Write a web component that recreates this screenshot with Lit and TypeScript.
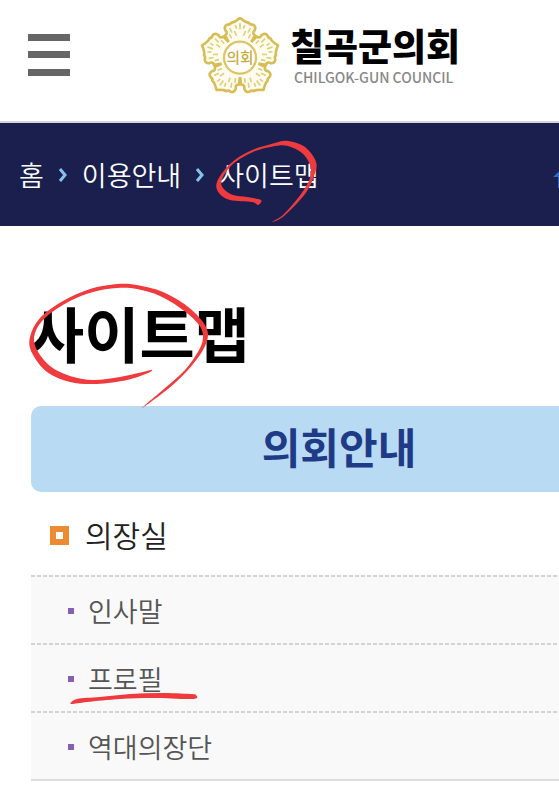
import { LitElement, html, svg, css } from "lit";
import { customElement } from "lit/decorators.js";

type Point = [number, number];

/** Closed Catmull-Rom outline through the points. */
function outline(points: Point[]): string {
  const n = points.length;
  let d = `M${points[0][0]} ${points[0][1]}`;
  for (let i = 0; i < n; i++) {
    const a = points[(i + n - 1) % n];
    const b = points[i];
    const c = points[(i + 1) % n];
    const e = points[(i + 2) % n];
    d += `C${b[0] + (c[0] - a[0]) / 6} ${b[1] + (c[1] - a[1]) / 6} ${c[0] - (e[0] - b[0]) / 6} ${c[1] - (e[1] - b[1]) / 6} ${c[0]} ${c[1]}`;
  }
  return d + "Z";
}

const crumbMark: Point[] = [
  [272, 222], [284, 216], [305, 194], [314, 176], [316, 162], [305, 147], [288, 141], [275, 143],
  [250, 151], [230, 164], [217, 182], [219, 193], [230, 200], [252, 202], [258, 205], [261, 200],
  [247, 197], [233, 195], [223, 188], [222, 179], [233, 164], [253, 152], [275, 146], [288, 146],
  [302, 153], [310, 165], [310, 178], [301, 194], [284, 214],
];

const titleMark: Point[] = [
  [142, 408], [168, 389], [188, 370], [203, 350], [208, 335], [203, 322], [187, 306], [163, 292],
  [137, 285], [117, 284], [90, 289], [63, 301], [40, 318], [30, 337], [32, 353], [47, 372],
  [70, 382], [97, 384], [127, 380], [148, 373], [152, 370], [147, 371], [120, 377], [93, 380],
  [70, 376], [50, 366], [36, 348], [35, 333], [46, 317], [70, 301], [93, 292], [117, 288],
  [137, 289], [160, 296], [183, 310], [199, 325], [203, 337], [199, 350], [185, 370], [165, 388],
];

const profileMark: Point[] = [
  [71, 704], [77, 699], [100, 697], [130, 694], [160, 693], [190, 694], [196, 695], [193, 699],
  [153, 698], [120, 699], [87, 702],
];

@customElement("app-root")
export class AppRoot extends LitElement {
  static styles = css`
    :host {
      display: block;
      position: relative;
      overflow: hidden;
      background: #fff;
      color: #222;
      font-family: "Noto Sans CJK KR", "Noto Sans", sans-serif;
    }
    *, *::before { box-sizing: border-box; }
    a { color: inherit; text-decoration: none; }
    h1, h2, ul { margin: 0; padding: 0; }
    ul { list-style: none; }
    /* The page is wider than the viewport and runs off its right side. */
    .page { width: calc(100% + 119px); }
    .header {
      display: grid;
      grid-template-columns: 1fr auto 1fr;
      align-items: center;
      height: 123px;
      padding: 0 28px 12px;
      border-bottom: 2px solid #d3d5de;
    }
    .menu {
      display: flex;
      flex-direction: column;
      justify-content: space-between;
      width: 42px;
      height: 42px;
      padding: 0;
      border: 0;
      background: none;
    }
    .menu span { height: 7px; background: #666; }
    .logo { display: flex; align-items: center; gap: 10px; margin: 4px 18px 0 0; }
    .emblem { width: 80px; height: 80px; }
    .emblem text { font-size: 44px; font-weight: 500; }
    .names { display: flex; flex-direction: column; }
    .name { font-size: 37px; font-weight: 900; line-height: 40px; color: #000; }
    .english { padding-left: 4px; font-size: 14px; font-weight: 500; line-height: 24px; color: #888; }
    .path {
      display: flex;
      align-items: center;
      justify-content: space-between;
      height: 103px;
      padding: 0 89px 0 19px;
      background: #1a1f4e;
      color: #fff;
    }
    .path a { display: flex; }
    .crumbs { display: flex; align-items: center; font-size: 27px; font-weight: 350; line-height: 40px; }
    .chevron { width: 10px; height: 14px; margin: 0 14px; }
    .home { width: 36px; height: 36px; }
    .main { padding: 72px 31px 0; }
    .title { margin-left: -2px; font-size: 60px; font-weight: 700; line-height: 68px; color: #000; }
    .section {
      height: 86px;
      margin-top: 40px;
      border-radius: 10px;
      background: #b8dbf3;
      color: #1f3a87;
      font-size: 42px;
      font-weight: 700;
      line-height: 80px;
      text-align: center;
    }
    .group {
      display: flex;
      align-items: center;
      gap: 16px;
      height: 83px;
      padding-left: 19px;
      font-size: 30px;
      font-weight: 350;
      line-height: 40px;
    }
    .group::before { content: ""; width: 19px; height: 19px; margin-top: 4px; border: 6px solid #ed8b33; }
    .list { border-bottom: 2px solid #ddd; }
    .item {
      display: flex;
      align-items: center;
      gap: 14px;
      height: 68px;
      padding: 2px 0 0 37px;
      background: repeating-linear-gradient(90deg, #d3d3d3 0 4px, #f9f9f9 4px 6px) top / 100% 2px no-repeat #f9f9f9;
      color: #555;
      font-size: 27px;
      font-weight: 350;
    }
    .item::before { content: ""; width: 6px; height: 6px; margin-top: 2px; background: #8560b5; }
    .marks { position: absolute; top: 0; left: 0; width: 559px; height: 785px; pointer-events: none; }
  `;

  private chevron() {
    return html`<svg class="chevron" viewBox="0 0 10 14" aria-hidden="true">
      <path d="M2 1L7 7L2 13" fill="none" stroke="#86c3ec" stroke-width="3" />
    </svg>`;
  }

  private emblem() {
    const petal = "M-34 -47L-45 -67C-39 -70 -38 -77 -44 -82C-48 -90 -44 -98 -37 -99C-32 -99 -28 -101 -26 -105C-18 -105 -8 -113 0 -120C8 -113 18 -105 26 -105C28 -101 32 -99 37 -99C44 -98 48 -90 44 -82C38 -77 39 -70 45 -67L34 -47";
    const veins = "M-25 -58L-32 -70M-24 -75L-31 -89M-11 -66L-16 -80M-10 -87L-14 -98M0 -85L0 -103M10 -87L14 -98M11 -66L16 -80M24 -75L31 -89M25 -58L32 -70";
    return html`<svg class="emblem" viewBox="-120 -122 240 240" role="img" aria-label="의회">
      ${[0, 72, 144, 216, 288].map(
        (angle) => svg`<g transform="rotate(${angle})" fill="none" stroke-linejoin="round">
          <path d=${petal} fill="#fffdf0" stroke="#d8bd57" stroke-width="8" />
          <path d=${veins} stroke="#e2cd7c" stroke-width="5" />
        </g>`,
      )}
      <circle r="48" fill="#fff" stroke="#dcc469" stroke-width="7" />
      <text y="16" text-anchor="middle" fill="#c9aa3c">의회</text>
    </svg>`;
  }

  render() {
    return html`
      <div class="page">
        <header class="header">
          <button class="menu" aria-label="메뉴"><span></span><span></span><span></span></button>
          <a class="logo" href="#">
            ${this.emblem()}
            <span class="names">
              <span class="name">칠곡군의회</span>
              <span class="english">CHILGOK-GUN COUNCIL</span>
            </span>
          </a>
        </header>
        <nav class="path">
          <div class="crumbs">
            <a href="#">홈</a>${this.chevron()}<a href="#">이용안내</a>${this.chevron()}<a href="#">사이트맵</a>
          </div>
          <a href="#" aria-label="홈">
            <svg class="home" viewBox="0 0 36 36">
              <path d="M18 3L36 20H31V31H5V20H0Z" fill="#3268c8" />
            </svg>
          </a>
        </nav>
        <main class="main">
          <h1 class="title">사이트맵</h1>
          <h2 class="section">의회안내</h2>
          <a class="group" href="#">의장실</a>
          <ul class="list">
            ${["인사말", "프로필", "역대의장단"].map((name) => html`<li><a class="item" href="#">${name}</a></li>`)}
          </ul>
        </main>
      </div>
      <svg class="marks" viewBox="0 0 559 785" fill="#f03b3e" aria-hidden="true">
        ${[crumbMark, titleMark, profileMark].map((points) => svg`<path d=${outline(points)} />`)}
      </svg>
    `;
  }
}
